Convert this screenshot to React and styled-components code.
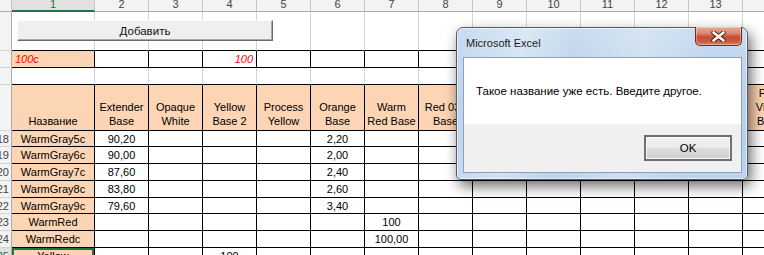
import React from 'react';
import styled, { createGlobalStyle } from 'styled-components';

const GlobalStyle = createGlobalStyle`
  html, body {
    margin: 0;
    padding: 0;
    background: #fff;
  }
  body {
    font-family: "Liberation Sans", Arial, sans-serif;
    overflow: hidden;
  }
`;

const Screen = styled.div`
  position: relative;
  width: 764px;
  height: 255px;
  overflow: hidden;
  background: #fff;
`;

const Sheet = styled.div`
  display: grid;
  grid-template-columns: 12px 83px repeat(13, 54px);
  grid-template-rows: 12px 39px 17px 17px 46px 16px 17px 17px 17px 16px 17px 17px 17px;
  font-size: 11px;
  color: #000;
`;

const ColHead = styled.div`
  box-sizing: border-box;
  background: ${p => (p.$active ? '#e1e1e1' : '#f3f3f3')};
  border-right: 1px solid #c6c6c6;
  border-bottom: ${p => (p.$active ? '2px solid #217346' : '1px solid #ababab')};
  color: ${p => (p.$active ? '#217346' : '#444')};
  text-align: center;
  line-height: 9px;
  overflow: hidden;
`;

const RowHead = styled.div`
  box-sizing: border-box;
  display: flex;
  justify-content: flex-end;
  align-items: center;
  padding-right: 2px;
  overflow: hidden;
  white-space: nowrap;
  background: ${p => (p.$active ? '#e1e1e1' : '#f3f3f3')};
  border-right: 1px solid #ababab;
  border-bottom: 1px solid #d4d4d4;
  color: ${p => (p.$active ? '#217346' : '#444')};
`;

const Cell = styled.div`
  box-sizing: border-box;
  display: flex;
  align-items: ${p => (p.$bottom ? 'flex-end' : 'center')};
  justify-content: ${p => ({ left: 'flex-start', right: 'flex-end' }[p.$align] || 'center')};
  padding: ${p => (p.$bottom ? '0 2px 2px' : '0 3px')};
  background: ${p => p.$fill || '#fff'};
  border-right: 1px solid ${p => (p.$grid ? '#d4d4d4' : '#000')};
  border-bottom: 1px solid #000;
  box-shadow: ${p => (p.$selected ? 'inset 0 0 0 2px #217346' : 'none')};
  overflow: hidden;
  white-space: pre;
  text-align: center;
  line-height: 14px;
  color: ${p => p.$color || '#000'};
  font-style: ${p => (p.$italic ? 'italic' : 'normal')};
`;

const SheetButton = styled.div`
  position: absolute;
  left: 17px;
  top: 20px;
  width: 256px;
  height: 21px;
  box-sizing: border-box;
  display: flex;
  align-items: center;
  justify-content: center;
  background: #efefef;
  border: 1px solid;
  border-color: #fcfcfc #6d6d6d #6d6d6d #fcfcfc;
  box-shadow: inset -1px -1px 0 #a8a8a8;
  font-size: 11.5px;
  color: #111;
`;

const Dialog = styled.div`
  position: absolute;
  left: 456px;
  top: 27px;
  width: 292px;
  height: 153px;
  box-sizing: border-box;
  display: flex;
  flex-direction: column;
  border: 1px solid #4d5c6e;
  border-radius: 7px 7px 5px 5px;
  background:
    linear-gradient(100deg, rgba(255,255,255,0) 0%, rgba(255,255,255,0.35) 22%, rgba(255,255,255,0) 38%, rgba(255,255,255,0.25) 60%, rgba(255,255,255,0) 80%),
    linear-gradient(180deg, #c9dcf0 0%, #b8d0ea 50%, #bcd3ec 100%);
  box-shadow: inset 0 0 0 1px rgba(255,255,255,0.6), 3px 6px 14px rgba(0,0,0,0.6);
`;

const TitleBar = styled.div`
  position: relative;
  height: 29px;
  display: flex;
  align-items: center;
  padding-left: 9px;
  font-size: 11px;
  color: #1a1a1a;
`;

const CloseButton = styled.div`
  position: absolute;
  top: -1px;
  right: 5px;
  width: 47px;
  height: 19px;
  box-sizing: border-box;
  display: flex;
  align-items: center;
  justify-content: center;
  border: 1px solid #6f2b20;
  border-top: none;
  border-radius: 0 0 5px 5px;
  background: linear-gradient(180deg, #e6a896 0%, #d88a74 35%, #c54a33 55%, #cc5a42 80%, #dc8068 100%);
  box-shadow: inset 0 0 0 1px rgba(255,255,255,0.35);
`;

const Client = styled.div`
  flex: 1;
  display: flex;
  flex-direction: column;
  margin: 0 5px 6px 6px;
  border: 1px solid #8da2b9;
  background: #fff;
`;

const Message = styled.div`
  flex: 1;
  display: flex;
  align-items: center;
  padding-left: 12px;
  font-size: 11.5px;
  color: #000;
`;

const Footer = styled.div`
  height: 48px;
  display: flex;
  align-items: center;
  justify-content: flex-end;
  padding-right: 9px;
  background: #f0f0f0;
`;

const OkButton = styled.div`
  width: 88px;
  height: 26px;
  box-sizing: border-box;
  display: flex;
  align-items: center;
  justify-content: center;
  border: 2px solid #707070;
  background: linear-gradient(180deg, #f2f2f2 0%, #ebebeb 50%, #dddddd 51%, #cfcfcf 100%);
  box-shadow: inset 0 0 0 1px #f8f8f8;
  font-size: 11.5px;
  color: #000;
`;

const headers = [
  'Название', 'Extender\nBase', 'Opaque\nWhite', 'Yellow\nBase 2', 'Process\nYellow',
  'Orange\nBase', 'Warm\nRed Base', 'Red 032\nBase', 'Rubine\nRed Base', 'Rhodamine\nRed',
  'Purple\nBase', 'Violet\nBase', 'Reflex\nBlue', 'Fluo\nViolet\nBase',
];

const rows = [
  { n: 18, name: 'WarmGray5c', v: { 2: '90,20', 6: '2,20' } },
  { n: 19, name: 'WarmGray6c', v: { 2: '90,00', 6: '2,00' } },
  { n: 20, name: 'WarmGray7c', v: { 2: '87,60', 6: '2,40' } },
  { n: 21, name: 'WarmGray8c', v: { 2: '83,80', 6: '2,60' } },
  { n: 22, name: 'WarmGray9c', v: { 2: '79,60', 6: '3,40' } },
  { n: 23, name: 'WarmRed', v: { 7: '100' } },
  { n: 24, name: 'WarmRedc', v: { 7: '100,00' } },
  { n: 25, name: 'Yellow', v: { 4: '100' }, selected: true },
];

const cols = Array.from({ length: 14 }, (_, i) => i + 1);
const PEACH = '#fcd5b4';

const CloseIcon = () => (
  <svg width="15" height="11" viewBox="0 0 15 11">
    <path d="M2.5 1.5 L12.5 9.5 M12.5 1.5 L2.5 9.5" stroke="#4a1a12" strokeWidth="4.4" strokeLinecap="round" />
    <path d="M2.5 1.5 L12.5 9.5 M12.5 1.5 L2.5 9.5" stroke="#fff" strokeWidth="2.6" strokeLinecap="round" />
  </svg>
);

export default function App() {
  return (
    <Screen>
      <GlobalStyle />
      <Sheet>
        <ColHead />
        {cols.map(c => (
          <ColHead key={c} $active={c === 1}>{c}</ColHead>
        ))}

        <RowHead />
        {cols.map(c => <Cell key={c} $grid />)}

        <RowHead />
        {cols.map(c => (
          <Cell
            key={c}
            $fill={c === 1 ? PEACH : '#fff'}
            $align={c === 1 ? 'left' : c === 4 ? 'right' : 'center'}
            $italic
            $color="#ff0000"
          >
            {c === 1 ? '100c' : c === 4 ? '100' : ''}
          </Cell>
        ))}

        <RowHead />
        {cols.map(c => <Cell key={c} $grid />)}

        <RowHead />
        {headers.map((h, i) => (
          <Cell key={i} $fill={PEACH} $bottom>{h}</Cell>
        ))}

        {rows.map(r => (
          <React.Fragment key={r.n}>
            <RowHead $active={r.selected}>{r.n}</RowHead>
            {cols.map(c => (
              <Cell
                key={c}
                $fill={c === 1 ? PEACH : '#fff'}
                $selected={c === 1 && r.selected}
              >
                {c === 1 ? r.name : r.v[c] || ''}
              </Cell>
            ))}
          </React.Fragment>
        ))}
      </Sheet>

      <SheetButton>Добавить</SheetButton>

      <Dialog>
        <TitleBar>
          Microsoft Excel
          <CloseButton><CloseIcon /></CloseButton>
        </TitleBar>
        <Client>
          <Message>Такое название уже есть. Введите другое.</Message>
          <Footer>
            <OkButton>OK</OkButton>
          </Footer>
        </Client>
      </Dialog>
    </Screen>
  );
}
